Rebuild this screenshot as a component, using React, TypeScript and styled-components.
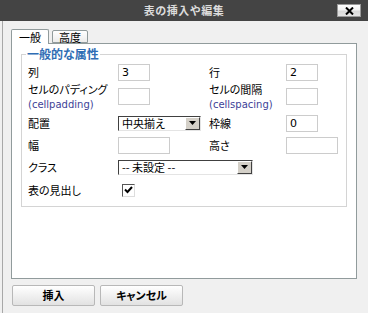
import React from 'react';
import styled, {createGlobalStyle} from 'styled-components';

const GlobalStyle = createGlobalStyle`
    html, body {
        margin: 0;
        padding: 0;
        background: #f0f0f0;
    }
    body {
        font-family: "Noto Sans CJK JP", "DejaVu Sans", sans-serif;
        font-size: 12px;
        color: #000;
    }
`

const JP = `"Noto Sans CJK JP", "DejaVu Sans", sans-serif`
const LATIN = `"DejaVu Sans", "Noto Sans CJK JP", sans-serif`

interface FieldProps {
    label: string;
    sub?: string;
    children?: React.ReactNode;
}

const Field: React.FC<FieldProps> = (props) => {
    return (
        <>
            <Label>
                <span>{props.label}</span>
                {props.sub && <SubLabel>{props.sub}</SubLabel>}
            </Label>
            <Cell>{props.children}</Cell>
        </>
    );
}

const Select: React.FC<{ value: string; width: number }> = (props) => {
    return (
        <SelectBox $w={props.width}>
            <SelectText>{props.value}</SelectText>
            <SelectArrow>
                <svg width="7" height="4" viewBox="0 0 7 4">
                    <path d="M0 0 H7 L3.5 4 Z" fill="#000"/>
                </svg>
            </SelectArrow>
        </SelectBox>
    );
}

const App: React.FC = () => {
    return (
        <Window>
            <GlobalStyle/>
            <TitleBar>
                <Title>表の挿入や編集</Title>
                <CloseButton>
                    <svg width="9" height="8" viewBox="0 0 9 8">
                        <path d="M1 0.5 L8 7.5 M8 0.5 L1 7.5" stroke="#000" strokeWidth="2"/>
                    </svg>
                </CloseButton>
            </TitleBar>
            <Body>
                <Tabs>
                    <Tab $active>一般</Tab>
                    <Tab>高度</Tab>
                </Tabs>
                <Panel>
                    <Group>
                        <Legend>一般的な属性</Legend>
                        <FormGrid>
                            <Field label="列"><TextBox $w={32} value="3" readOnly/></Field>
                            <Field label="行"><TextBox $w={32} value="2" readOnly/></Field>

                            <Field label="セルのパディング" sub="(cellpadding)"><TextBox $w={32} readOnly/></Field>
                            <Field label="セルの間隔" sub="(cellspacing)"><TextBox $w={32} readOnly/></Field>

                            <Field label="配置"><Select value="中央揃え" width={83}/></Field>
                            <Field label="枠線"><TextBox $w={32} value="0" readOnly/></Field>

                            <Field label="幅"><TextBox $w={52} readOnly/></Field>
                            <Field label="高さ"><TextBox $w={52} readOnly/></Field>

                            <Field label="クラス"><Select value="-- 未設定 --" width={135}/></Field>
                            <Spacer/>

                            <Field label="表の見出し">
                                <CheckBox>
                                    <svg width="9" height="8" viewBox="0 0 9 8">
                                        <path d="M1 3.5 L3.5 6 L8 1" stroke="#000" strokeWidth="2" fill="none"/>
                                    </svg>
                                </CheckBox>
                            </Field>
                        </FormGrid>
                    </Group>
                </Panel>
                <Buttons>
                    <Button>挿入</Button>
                    <Button>キャンセル</Button>
                </Buttons>
            </Body>
        </Window>
    );
}

export default App;

const Window = styled.div`
    width: 368px;
    height: 313px;
    background: #f0f0f0;
    overflow: hidden;
`

const TitleBar = styled.div`
    height: 21px;
    background: #444444;
    display: grid;
    grid-template-columns: 1fr auto 1fr;
    align-items: center;
`

const Title = styled.div`
    grid-column: 2;
    color: #dcdcdc;
    font-family: ${JP};
    font-weight: bold;
    font-size: 11px;
    letter-spacing: 0.5px;
    line-height: 21px;
`

const CloseButton = styled.div`
    grid-column: 3;
    justify-self: end;
    margin-right: 7px;
    width: 24px;
    height: 13px;
    box-sizing: border-box;
    background: linear-gradient(#ffffff 0%, #f4f4f4 45%, #d8d8d8 55%, #e4e4e4 100%);
    border: 1px solid #9a9a9a;
    display: flex;
    align-items: center;
    justify-content: center;
`

const Body = styled.div`
    margin-left: 2px;
    border-left: 1px solid #a8a8a8;
    height: 292px;
    padding: 8px 0 0 8px;
    box-sizing: border-box;
`

const Tabs = styled.div`
    display: flex;
    align-items: flex-end;
    gap: 3px;
    height: 14px;
    position: relative;
    z-index: 1;
`

const Tab = styled.div<{ $active?: boolean }>`
    box-sizing: border-box;
    width: ${p => p.$active ? 38 : 36}px;
    height: ${p => p.$active ? 15 : 13}px;
    margin-bottom: ${p => p.$active ? -1 : 0}px;
    border: 1px solid #919b9c;
    border-bottom: ${p => p.$active ? 'none' : '1px solid #919b9c'};
    border-radius: 2px 2px 0 0;
    background: ${p => p.$active ? '#ffffff' : 'linear-gradient(#ffffff, #ececec)'};
    font-family: ${JP};
    font-size: 11px;
    line-height: ${p => p.$active ? 14 : 12}px;
    text-align: center;
`

const Panel = styled.div`
    width: 346px;
    height: 236px;
    box-sizing: border-box;
    background: #ffffff;
    border: 1px solid #919b9c;
    padding: 3px 9px 0 9px;
`

const Group = styled.fieldset`
    margin: 0;
    padding: 3px 6px 4px 6px;
    border: 1px solid #d4d4d4;
    min-width: 0;
`

const Legend = styled.legend`
    padding: 0 1px;
    margin-left: -2px;
    color: #2f6db4;
    font-family: ${JP};
    font-feature-settings: "palt";
    font-weight: bold;
    font-size: 12px;
    line-height: 14px;
`

const FormGrid = styled.div`
    display: grid;
    grid-template-columns: 90px 91px 77px 1fr;
    grid-template-rows: 17px 31px 22px 22px 22px 24px;
    align-items: center;
`

const Label = styled.div`
    display: flex;
    flex-direction: column;
    font-family: ${JP};
    font-feature-settings: "palt";
    font-size: 11px;
    line-height: 15px;
    white-space: nowrap;
`

const SubLabel = styled.span`
    font-family: ${LATIN};
    font-size: 10px;
    color: #3d3f97;
`

const Cell = styled.div`
    display: flex;
    align-items: center;
`

const Spacer = styled.div`
    grid-column: span 2;
`

const TextBox = styled.input<{ $w: number }>`
    flex-shrink: 0;
    width: ${p => p.$w}px;
    height: 17px;
    box-sizing: border-box;
    border: 1px solid #cccccc;
    background: #fff;
    padding: 0 3px;
    margin: 0;
    font-family: ${LATIN};
    font-size: 11px;
    color: #000;
    outline: none;
`

const SelectBox = styled.div<{ $w: number }>`
    flex-shrink: 0;
    width: ${p => p.$w}px;
    height: 15px;
    box-sizing: border-box;
    display: flex;
    align-items: center;
    background: #fff;
    border-top: 1px solid #404040;
    border-left: 1px solid #404040;
    border-right: 1px solid #e4e4e4;
    border-bottom: 1px solid #e4e4e4;
`

const SelectText = styled.div`
    flex: 1;
    padding-left: 3px;
    font-family: ${JP};
    font-feature-settings: "palt";
    font-size: 11px;
    line-height: 13px;
    white-space: nowrap;
`

const SelectArrow = styled.div`
    flex-shrink: 0;
    width: 15px;
    height: 13px;
    box-sizing: border-box;
    background: #d4d0c8;
    border-top: 1px solid #ffffff;
    border-left: 1px solid #ffffff;
    border-right: 1px solid #404040;
    border-bottom: 1px solid #404040;
    display: flex;
    align-items: center;
    justify-content: center;
`

const CheckBox = styled.div`
    margin-left: 4px;
    width: 13px;
    height: 13px;
    box-sizing: border-box;
    background: #fff;
    border-top: 1px solid #555;
    border-left: 1px solid #555;
    border-right: 1px solid #ddd;
    border-bottom: 1px solid #ddd;
    display: flex;
    align-items: center;
    justify-content: center;
`

const Buttons = styled.div`
    display: flex;
    gap: 5px;
    margin: 6px 0 0 1px;
`

const Button = styled.div`
    width: 83px;
    height: 21px;
    box-sizing: border-box;
    border: 1px solid #b8b8b8;
    border-radius: 2px;
    background: linear-gradient(#ffffff, #e2e2e2);
    font-family: ${JP};
    font-feature-settings: "palt";
    font-weight: bold;
    font-size: 11px;
    line-height: 19px;
    text-align: center;
`
